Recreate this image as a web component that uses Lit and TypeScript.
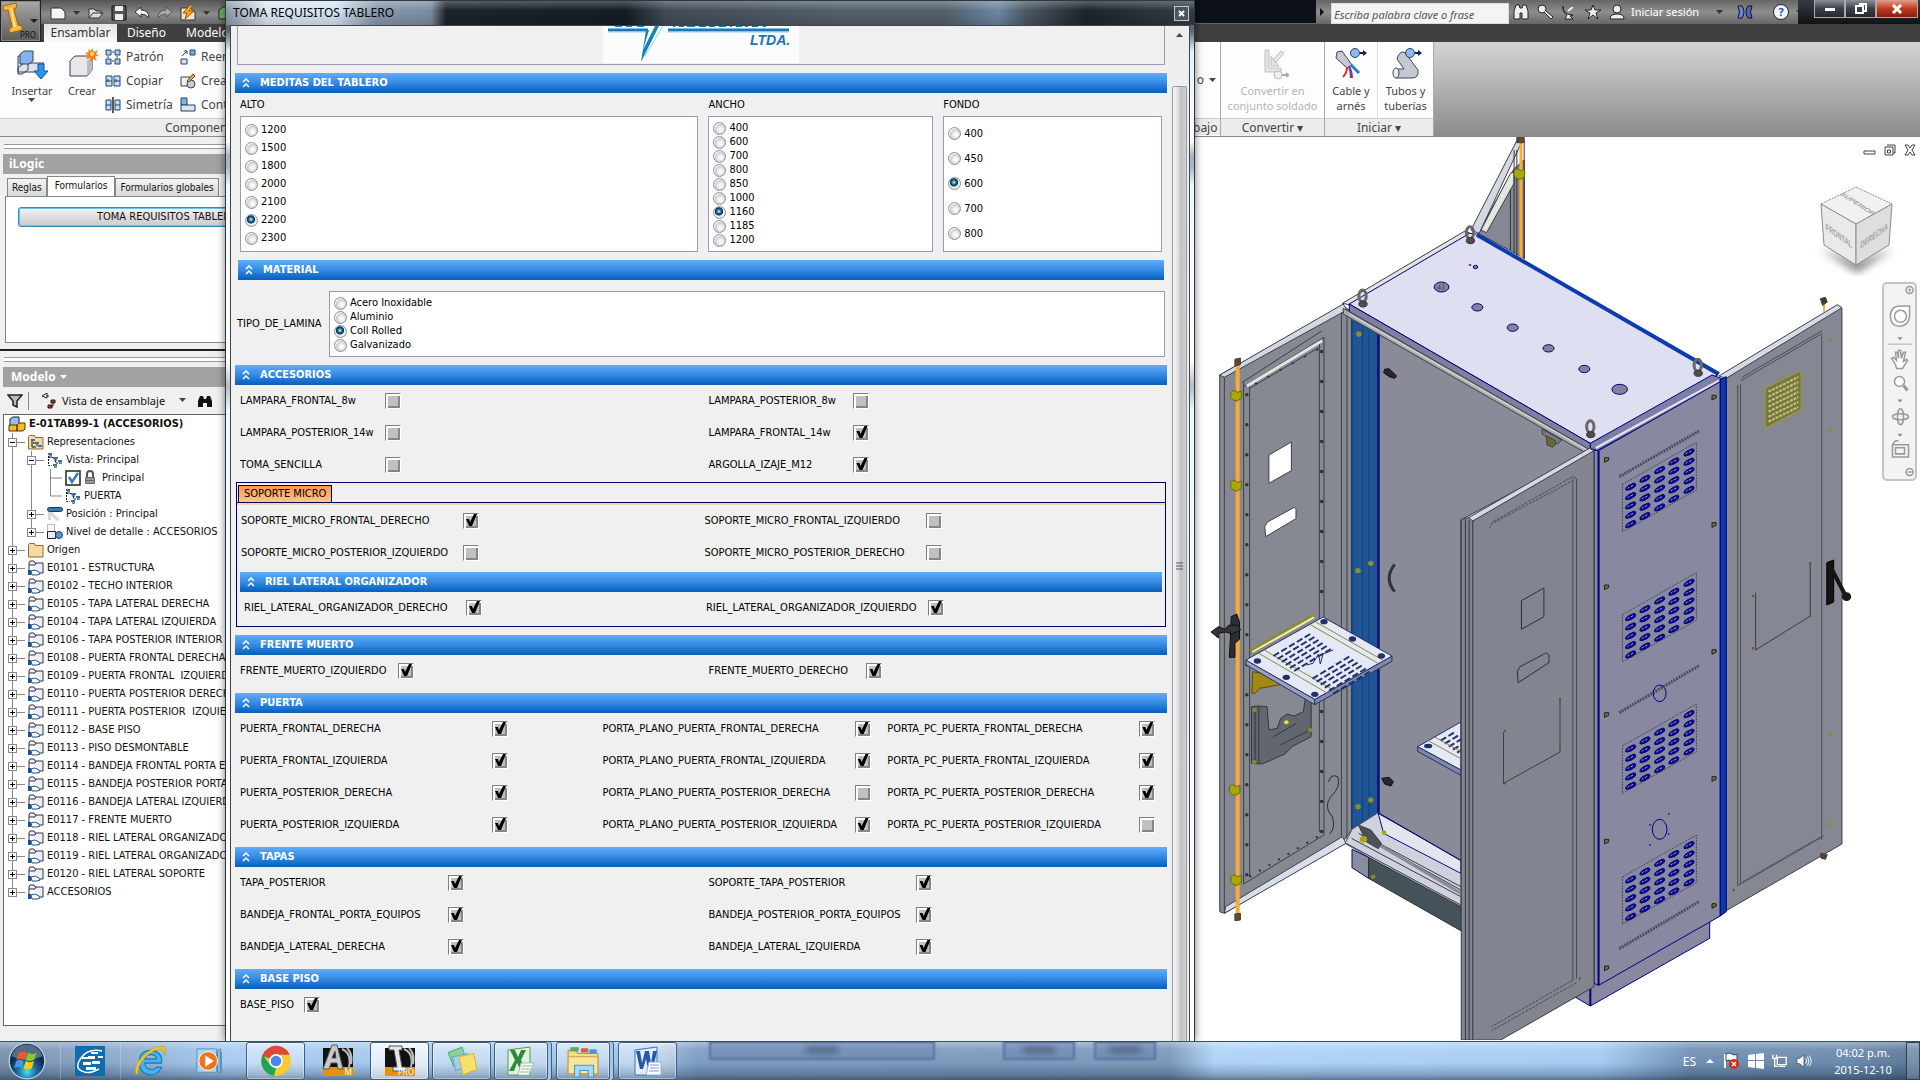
import { LitElement, html, svg, css, nothing } from "lit";
import { customElement } from "lit/decorators.js";

type Field = [label: string, on: boolean];

const ALTO = ["1200", "1500", "1800", "2000", "2100", "2200", "2300"];
const ANCHO = ["400", "600", "700", "800", "850", "1000", "1160", "1185", "1200"];
const FONDO = ["400", "450", "600", "700", "800"];
const LAMINA = ["Acero Inoxidable", "Aluminio", "Coll Rolled", "Galvanizado"];

const ACCESORIOS: Field[] = [
  ["LAMPARA_FRONTAL_8w", false], ["LAMPARA_POSTERIOR_8w", false],
  ["LAMPARA_POSTERIOR_14w", false], ["LAMPARA_FRONTAL_14w", true],
  ["TOMA_SENCILLA", false], ["ARGOLLA_IZAJE_M12", true],
];
const MICRO: Field[] = [
  ["SOPORTE_MICRO_FRONTAL_DERECHO", true], ["SOPORTE_MICRO_FRONTAL_IZQUIERDO", false],
  ["SOPORTE_MICRO_POSTERIOR_IZQUIERDO", false], ["SOPORTE_MICRO_POSTERIOR_DERECHO", false],
];
const RIEL: Field[] = [["RIEL_LATERAL_ORGANIZADOR_DERECHO", true], ["RIEL_LATERAL_ORGANIZADOR_IZQUIERDO", true]];
const FRENTE: Field[] = [["FRENTE_MUERTO_IZQUIERDO", true], ["FRENTE_MUERTO_DERECHO", true]];
const PUERTA: Field[] = [
  ["PUERTA_FRONTAL_DERECHA", true], ["PORTA_PLANO_PUERTA_FRONTAL_DERECHA", true], ["PORTA_PC_PUERTA_FRONTAL_DERECHA", true],
  ["PUERTA_FRONTAL_IZQUIERDA", true], ["PORTA_PLANO_PUERTA_FRONTAL_IZQUIERDA", true], ["PORTA_PC_PUERTA_FRONTAL_IZQUIERDA", true],
  ["PUERTA_POSTERIOR_DERECHA", true], ["PORTA_PLANO_PUERTA_POSTERIOR_DERECHA", false], ["PORTA_PC_PUERTA_POSTERIOR_DERECHA", true],
  ["PUERTA_POSTERIOR_IZQUIERDA", true], ["PORTA_PLANO_PUERTA_POSTERIOR_IZQUIERDA", true], ["PORTA_PC_PUERTA_POSTERIOR_IZQUIERDA", false],
];
const TAPAS: Field[] = [
  ["TAPA_POSTERIOR", true], ["SOPORTE_TAPA_POSTERIOR", true],
  ["BANDEJA_FRONTAL_PORTA_EQUIPOS", true], ["BANDEJA_POSTERIOR_PORTA_EQUIPOS", true],
  ["BANDEJA_LATERAL_DERECHA", true], ["BANDEJA_LATERAL_IZQUIERDA", true],
];

type Node = { text: string; depth: number; icon: string; sign?: "+" | "-" };
const part = (text: string): Node => ({ text, depth: 0, icon: "part", sign: "+" });
const TREE: Node[] = [
  { text: "Representaciones", depth: 0, icon: "reps", sign: "-" },
  { text: "Vista: Principal", depth: 1, icon: "view", sign: "-" },
  { text: "Principal", depth: 2, icon: "check" },
  { text: "PUERTA", depth: 2, icon: "view" },
  { text: "Posición : Principal", depth: 1, icon: "pos", sign: "+" },
  { text: "Nivel de detalle : ACCESORIOS", depth: 1, icon: "lod", sign: "+" },
  { text: "Origen", depth: 0, icon: "folder", sign: "+" },
  ...[
    "E0101 - ESTRUCTURA", "E0102 - TECHO INTERIOR", "E0105 - TAPA LATERAL DERECHA", "E0104 - TAPA LATERAL IZQUIERDA",
    "E0106 - TAPA POSTERIOR INTERIOR", "E0108 - PUERTA FRONTAL DERECHA", "E0109 - PUERTA FRONTAL  IZQUIERDA",
    "E0110 - PUERTA POSTERIOR DERECHA", "E0111 - PUERTA POSTERIOR  IZQUIERDA", "E0112 - BASE PISO", "E0113 - PISO DESMONTABLE",
    "E0114 - BANDEJA FRONTAL PORTA E", "E0115 - BANDEJA POSTERIOR PORTA", "E0116 - BANDEJA LATERAL IZQUIERDA",
    "E0117 - FRENTE MUERTO", "E0118 - RIEL LATERAL ORGANIZADOR", "E0119 - RIEL LATERAL ORGANIZADOR",
    "E0120 - RIEL LATERAL SOPORTE", "ACCESORIOS",
  ].map(part),
];

const icon = (w: number, h: number, body: unknown) =>
  html`<svg class="ico" width=${w} height=${h} viewBox="0 0 ${w} ${h}" aria-hidden="true">${body}</svg>`;

const viewMarks = svg`<g fill="#3f6f9f" stroke="#123" stroke-width="1"><path d="M1.5 1v12.500h3M1.500 5.500h5M8.500 5.500v5.500h4" fill="none" stroke-dasharray="2 1"/><path d="M1 1h4v2H1zM6 5h5v2H6zM11 8h4v2h-4zM6 12h4v2H6z" stroke="none"/><path d="M2 4h3M7 8h3M12 11h3M7 15h3"/></g>`;
const folderShape = svg`<path d="M.5 15V2.500l1-1h5l1 2h7.500V15z" fill="#f6d9a0" stroke="#8b6a3c"/>`;
const TREE_ICONS: Record<string, unknown> = {
  part: icon(16, 16, svg`<path d="M1 3l1-2h4l1 2h8v10h-3" fill="#eceef6" stroke="#334"/><path d="M1 3v7M1 5h6l1-2" fill="none" stroke="#334"/><path d="M0 10h3v5H0z" fill="#1d4f94"/><path d="M3 11l4-1 4 2 1 2-3 1H4z" fill="#fff" stroke="#1d4f94"/>`),
  reps: icon(16, 16, svg`${folderShape}<path d="M3 5h4v2H3zM7 8h4v2H7zM10 11h4v2h-4z" fill="#3f6f9f"/><path d="M4 7v6h4M5 9h2M9 10v2" stroke="#111" fill="none"/>`),
  view: icon(16, 16, viewMarks),
  pos: icon(16, 16, svg`<path d="M1 6l3-1 9 9-3 1zM1 6h3v8H1z" fill="#d8d8dc"/><rect x="0.500" y="1.500" width="15" height="4" rx="2" fill="#3f78ad" stroke="#123a60"/>`),
  lod: icon(16, 16, svg`<path d="M.5.500h7v7h-7z" fill="#fafafa" stroke="#bbb"/><path d="M.5 7.500h8v7h-8z" fill="#e4ecf6" stroke="#222"/><circle cx="12" cy="11" r="3.500" fill="#5d92cc" stroke="#16406e"/>`),
  folder: icon(16, 16, folderShape),
  check: icon(34, 16, svg`<rect x="1" y="1" width="14" height="14" fill="#fff" stroke="#222" stroke-width="1.500"/><path d="M4 7l3 5 6-9" fill="none" stroke="#3c78b8" stroke-width="2.500"/><path d="M22 8V4q0-3 3-3t3 3v4" fill="none" stroke="#555" stroke-width="2"/><rect x="20" y="7" width="10" height="7" rx="1" fill="#666"/><path d="M21 9h8M21 12h8" stroke="#ccc"/>`),
};

/* Cabinet drawing: the frame is 1568 x 2709 units, stretched over the view. */
const poly = (points: string, fill: string, stroke = "#3c3f4a") =>
  svg`<polygon points=${points} fill=${fill} stroke=${stroke}></polygon>`;
const line = (d: string, stroke = "#3c3f4a", width = 1, dash = "") =>
  svg`<path d=${d} fill="none" stroke=${stroke} stroke-width=${width} stroke-dasharray=${dash || nothing}></path>`;

const vent = (dy: number) => svg`<g transform="translate(0 ${dy})">
  ${line("M920 1063L1081 937V1080L920 1205z", "#4a4a58", 1, "2 1")}
  ${[[938, 1070], [969, 1046], [1001, 1020], [1032, 994], [1065, 967]].map(([x, y]) =>
    [0, 1, 2, 3, 4].map((r) => svg`<path transform="translate(${x} ${y + r * 28})" d="M-11 10l1-7 6-7 11-7 4 3-1 7-8 8-9 4z" fill="#0a0a8c" stroke="#00007c"></path><path transform="translate(${x} ${y + r * 28})" d="M-7 5l4-4M0 0l5-4" stroke="#a6a6d0" fill="none"></path>`))}
</g>`;
const hook = (x: number, y: number) => svg`<ellipse cx=${x} cy=${y - 10} rx="8" ry="18" fill="none" stroke="#66686c" stroke-width="3"></ellipse><ellipse cx=${x + 1} cy=${y + 14} rx="9" ry="9" fill="#4c4e52" stroke="#333"></ellipse>`;
const screw = (x: number, y: number) => svg`<path d="M${x - 4} ${y - 7}h9v8l-9 6z" fill="#6f7030" stroke="#222"></path>`;
const clamp = (x: number, y: number) => svg`<path d="M${x - 12} ${y - 10}l7 -6 8 6 8-4v22l-9 8-7-2-7-8z" fill="#a8a80c" stroke="#6a6a00"></path>`;
const slots = (x: number, y: number, rows: number, cols: number) => svg`<g stroke="#22306a" stroke-width="2">
  ${Array.from({ length: rows }, (_, r) => Array.from({ length: cols }, (_, c) =>
    svg`<path d="M${x + r * 9 + c * 17} ${y + r * 9 - c * 14}l12-10"></path>`))}</g>`;

const cabinet = svg`
  ${poly("605,310 683,118 706,90 706,385 640,335", "#858792")}
  ${poly("590,300 690,32 702,32 608,310", "#d4d8e2")}
  ${poly("612,300 676,130 684,125 684,160 624,308", "#e6e6e0")}
  ${line("M684 60V370M690 60V378M676 180V360M706 30V388", "#333")}
  ${line("M699 40V384", "#fbab2e", 3)}
  ${poly("690,22 706,22 706,38 690,38", "#6a4a10")}${clamp(696, 132)}

  ${poly("43,735 312,528 330,545 330,2100 310,2138 53,2350 43,2345", "#868892")}
  ${poly("43,735 312,522 320,540 53,742", "#d3d7e2")}
  ${poly("53,2350 56,2330 310,2120 318,2140", "#d9dcea")}
  ${line("M53 742V2345M308 548V2118M320 545V2128M330 560V2095")}
  ${line("M92 757L265 603M95 770L270 622V2115L95 2262V757M108 770V2242M260 630V2105")}
  ${line("M102 768L266 632", "#e4e4dc", 3)}
  ${line("M102 790V2240M265 660V2110", "#2f3036", 3, "3 27")}
  ${line("M108 2240L262 2115", "#333", 2, "2 9")}
  ${line("M120 762L262 654", "#333", 2, "2 12")}
  ${line("M108 775L262 650")}
  ${poly("150,975 199,936 199,1022 150,1060", "#fff")}
  ${poly("141,1190 147,1176 205,1132 209,1138 209,1166 143,1220", "#fff")}
  ${line("M82 700V2365", "#f9a93a", 4)}
  ${poly("76,688 88,684 88,704 76,708", "#6a4a10")}${poly("76,2352 88,2350 88,2370 76,2372", "#6a4a10")}
  ${clamp(79, 797)}${clamp(79, 1067)}${clamp(76, 1980)}${clamp(79, 2250)}
  ${poly("68,1460 80,1452 86,1475 86,1528 76,1540 76,1582 64,1582 66,1530", "#2c2d31", "#111")}
  ${poly("24,1506 40,1490 54,1498 62,1486 84,1486 88,1500 70,1512 56,1506 40,1510 40,1524", "#33343a", "#111")}

  ${poly("331,570 388,610 388,2048 345,2085 331,2098", "#1f5597", "#123a6c")}
  ${line("M354 590V2080M368 600V2070", "#14407c")}
  ${line("M388 612V2050", "#0a0a80", 2)}
  ${[[346, 612], [344, 1322], [372, 1300], [344, 2030], [372, 2010]].map(([x, y]) => svg`<ellipse cx=${x} cy=${y} rx="6" ry="8" fill="#8c8c2c"></ellipse>`)}

  ${poly("331,2098 388,2048 568,2192 568,2345 316,2140", "#cfd1dc", "#555")}
  ${poly("388,2050 568,2190 568,2230 400,2110", "#e4e5ee", "#0a0a80")}
  ${line("M318 2140L568 2325M330 2125L568 2300M345 2110L568 2280M390 2140L568 2270", "#3a3c44")}
  ${line("M360 2120L568 2290", "#888a96", 3)}
  ${poly("345,2085 372,2100 395,2140 388,2156 362,2135", "#4e5058")}
  ${poly("331,2158 367,2182 367,2245 331,2213", "#8a8ca0", "#0a0a80")}
  ${poly("367,2182 568,2330 568,2402 367,2245", "#45525a", "#2a3338")}
  <ellipse cx="356" cy="2128" rx="8" ry="10" fill="#a8a80c"></ellipse><ellipse cx="377" cy="2240" rx="5" ry="6" fill="#8c8c2c"></ellipse><ellipse cx="401" cy="2108" rx="5" ry="7" fill="#a8a80c"></ellipse>

  ${poly("390,600 850,950 850,962 568,1170 568,2192 390,2050", "#8a8b98", "#33343e")}
  ${line("M390 612V2050L568 2191", "#0a0a80")}
  ${poly("402,718 412,716 428,738 424,745 412,740 400,728", "#26272b", "#111")}
  ${line("M424 1303Q400 1345 424 1385", "#33343a", 3)}
  ${poly("396,1945 412,1942 421,1955 416,1968 402,1962", "#26272b", "#111")}
  ${poly("745,897 788,930 778,942 745,912", "#777a7c")}${poly("754,918 774,932 774,944 768,952 756,945", "#6c6a2a")}

  ${poly("310,520 577,303 592,312 325,524", "#e3e4e0")}
  ${poly("325,522 587,310 602,312 1127,735 850,940", "#dfdff2", "#00007c")}
  ${poly("325,522 850,940 850,962 325,545", "#7f80a0", "#00007c")}
  ${poly("312,535 325,545 850,960 835,965 312,552", "#a9ada9")}
  ${line("M325 552L845 962", "#e0e2dc", 1)}
  ${poly("850,940 1115,735 1135,745 1135,758 865,962 850,955", "#7e7fa6", "#00007c")}
  ${line("M862 954L1130 752", "#e4e4f4", 2)}
  ${line("M603 314L1130 732", "#0c3cae", 4)}
  ${[[526, 471, 16, 15], [604, 532, 12, 11], [681, 593, 12, 11], [759, 655, 12, 11], [837, 717, 12, 11], [914, 778, 17, 15], [600, 411, 5, 5]].map(([x, y, a, b]) =>
    svg`<ellipse cx=${x} cy=${y} rx=${a} ry=${b} fill="#8184a0" stroke="#00006c"></ellipse>`)}
  ${line("M516 474h10M522 464v16M530 460v20", "#555")}
  <circle cx="588" cy="405" r="3" fill="#8c2a2a"></circle>
  ${hook(588, 318)}${hook(354, 508)}${hook(1084, 716)}${hook(850, 900)}

  ${poly("1146,742 1390,530 1398,535 1398,2142 1146,2342", "#858792")}
  ${poly("1130,738 1388,524 1398,533 1146,745", "#d6dae6")}
  ${line("M1171 765V2267M1177 762V2262M1354 615V2130M1171 2267L1358 2118M1178 752L1355 610M1180 742L1355 602", "#4a4c56", 1)}
  ${line("M1182 2255L1352 2120", "#4a4c56", 1, "2 1")}
  ${poly("1231,775 1309,722 1309,838 1231,895", "#77783a", "#a0a02c")}
  ${line("M1238 785L1303 741M1238 800L1303 756M1238 815L1303 771M1238 830L1303 786M1238 845L1303 801M1238 860L1303 816M1238 875L1303 831", "#c4c48a", 2, "3 1")}
  ${line("M1210 1388V1560L1329 1458V1297", "#3c3c46")}
  ${[[1329, 1300], [1329, 1458], [1204, 1398], [1204, 1555], [1162, 2280]].map(([x, y]) => svg`<ellipse cx=${x} cy=${y} rx="2" ry="4" fill="#8a3a34"></ellipse>`)}
  ${[[1371, 630], [1371, 900], [1371, 1813], [1371, 2083]].map(([x, y]) => svg`<ellipse cx=${x} cy=${y} rx="4" ry="6" fill="#8c8c2c"></ellipse>`)}
  ${poly("1365,1298 1380,1290 1380,1416 1365,1425", "#141414", "#000")}
  ${line("M1374 1312L1405 1395", "#161616", 4)}<ellipse cx="1408" cy="1400" rx="10" ry="13" fill="#1a1a1a"></ellipse>
  ${line("M1359 520V545", "#f9a93a", 2)}${poly("1351,506 1362,502 1366,516 1356,526", "#4e3a14")}${poly("1352,2170 1366,2174 1362,2188 1352,2184", "#6a3a10")}

  ${poly("818,2602 850,2628 1110,2425 1110,2370 858,2560", "#8889a0", "#00007c")}
  ${line("M850 2572V2628", "#00007c", 2)}
  ${poly("858,960 868,962 1133,755 1133,2358 868,2566 858,2560", "#8889a0", "#00007c")}
  ${line("M868 962V2566", "#00007c", 2)}
  ${poly("1133,748 1146,740 1146,2345 1133,2358", "#1038ac", "#00007c")}
  ${[0, 391, 785, 1178].map(vent)}
  ${line("M913 1040L1088 902M913 1748L1088 1606M913 2456L1088 2314", "#4c4d5c", 3, "2 1")}
  <ellipse cx="1001" cy="1690" rx="14" ry="25" fill="none" stroke="#00007c"></ellipse>
  <ellipse cx="1001" cy="2098" rx="16" ry="30" fill="none" stroke="#00007c"></ellipse>
  ${[[980, 2085], [1021, 2052], [1021, 2112], [980, 2145]].map(([x, y]) => svg`<circle cx=${x} cy=${y} r="2" fill="#00007c"></circle>`)}
  ${[990, 1372, 1755, 2135, 2515].map((y) => screw(885, y))}${[803, 1185, 1566, 1947, 2328].map((y) => screw(1119, y))}

  ${poly("115,1625 175,1640 175,1664 130,1675 120,1690 113,1690", "#a08a12", "#5c4e00")}
  ${poly("112,1730 128,1728 146,1730 150,1800 168,1795 176,1765 190,1752 205,1758 225,1745 230,1700 242,1700 242,1820 200,1850 185,1872 135,1902 112,1900", "#62666e", "#34363c")}
  ${line("M128 1730V1900M160 1820L210 1780M175 1845L240 1800M120 1735V1898", "#34363c")}
  ${[[118, 1740], [118, 1896], [240, 1800]].map(([x, y]) => svg`<ellipse cx=${x} cy=${y} rx="5" ry="6" fill="#8c8c2c"></ellipse>`)}<ellipse cx="188" cy="1777" rx="5" ry="6" fill="#e4e420"></ellipse>
  ${line("M280 1955Q285 1930 300 1940Q308 1970 285 2000Q268 2030 288 2060Q296 2095 282 2112", "#26302c", 1)}
  ${line("M110 1566L248 1458", "#8c8c34", 5)}${line("M114 1566L248 1462", "#efefc4", 2)}
  ${poly("100,1590 250,1708 250,1724 100,1604", "#9aa0c0", "#22306a")}
  ${poly("250,1708 418,1578 418,1594 250,1724", "#8188ac", "#22306a")}
  ${poly("100,1590 268,1461 418,1578 250,1708", "#e5e8f6", "#22306a")}
  ${line("M128 1570L278 1690M140 1560L290 1680M240 1484L388 1600M252 1476L400 1592", "#8c8a3c", 1)}
  ${slots(160, 1578, 6, 5)}${slots(245, 1646, 6, 5)}
  ${line("M232 1605L246 1600L258 1572L262 1602L268 1572L290 1560", "#22306a", 1)}
  ${[[125, 1593], [270, 1475], [395, 1578], [250, 1693], [188, 1642], [332, 1527]].map(([x, y]) => svg`<ellipse cx=${x} cy=${y} rx="8" ry="8" fill="#22306a"></ellipse>`)}
  ${poly("474,1850 568,1776 568,1920", "#e5e8f6", "#22306a")}${poly("474,1850 568,1920 568,1936 474,1864", "#8188ac", "#22306a")}
  ${slots(524, 1832, 5, 2)}${line("M497 1832L568 1886M512 1822L568 1864", "#8c8a3c")}
  <ellipse cx="497" cy="1848" rx="9" ry="7" fill="#22306a"></ellipse>

  ${poly("569,1168 588,1162 594,1172 855,962 858,966 858,2570 655,2730 569,2730", "#82848f")}
  ${poly("585,1163 848,955 858,962 594,1173", "#d5d9e5")}
  ${line("M578 1168V2730M586 1170V2730M594 1172V2730", "#33363f", 1)}
  ${line("M812 1046V2550M820 1046V2545", "#4a4c56")}
  ${line("M630 1195L638 1175L812 1040L820 1046M640 1178L812 1052M812 2550L635 2690M820 2558L635 2702", "#4a4c56", 1, "3 1")}
  ${line("M700 1412L749 1374V1460L700 1498zM691 1625L697 1610L755 1568L760 1575V1598L693 1658z", "#2c2e38")}
  ${line("M661 1805V1960L784 1866V1705", "#3c3e48")}
  ${[[784, 1707], [664, 1803], [664, 1960], [784, 1864], [827, 2545]].map(([x, y]) => svg`<ellipse cx=${x} cy=${y} rx="2" ry="4" fill="#8a3a34"></ellipse>`)}
`;

@customElement("form-bar")
class FormBar extends LitElement {
  static properties = { text: {} };
  declare text: string;
  static styles = css`
    :host { display: block; }
    .bar { display: flex; align-items: center; gap: 10px; width: 100%; height: 20px; padding: 0 7px; border: 0;
      background: linear-gradient(#62adf8, #2f86e0 55%, #0b64c4 92%, #1560b0); color: #fff;
      font: bold 11px/20px "DejaVu Sans Condensed", "Noto Sans", sans-serif; text-align: left; }
  `;
  render() {
    return html`<button class="bar" type="button">
      <svg width="8" height="10" viewBox="0 0 8 10" aria-hidden="true"><path d="M1 4l3-3 3 3M1 9l3-3 3 3" fill="none" stroke="#fff" stroke-width="1.500"/></svg>
      <span>${this.text}</span></button>`;
  }
}

@customElement("requisitos-form")
class RequisitosForm extends LitElement {
  static styles = css`
    :host { display: block; box-sizing: border-box; padding: 0 2px 0 4px; background: #f0f0f0; color: #000;
      font: 11px/14px "DejaVu Sans Condensed", "Noto Sans", sans-serif; white-space: nowrap; }
    .banner { display: flex; justify-content: center; box-sizing: border-box; height: 39px; margin: 0 2px 8px; border: 1px solid #9a9ab4; border-top: 0; }
    .logo { width: 196px; height: 37px; background: #fcfcfd; }
    .sizes { display: grid; grid-template-columns: 459fr 225fr 219fr; column-gap: 10px; padding: 0 5px 8px; }
    .caption { display: block; line-height: 23px; }
    .box { display: flex; flex-direction: column; box-sizing: border-box; border: 1px solid #9a9ab4; background: #fff; }
    .sizes .box { height: 136px; }
    fieldset { display: block; min-width: 0; margin: 0; padding: 0; border: 0; }
    legend { padding: 0; }
    .opt { display: flex; align-items: center; gap: 3px; padding-left: 4px; }
    .r18, .r14, .r25 { padding-top: 4px; }
    .r18 .opt { height: 18px; }
    .r14 .opt { height: 14px; }
    .r25 .opt { height: 25px; }
    .narrow { margin: 0 3px; }
    .lamina { display: grid; grid-template-columns: 92px 1fr; align-items: center; padding: 11px 2px 8px; }
    .lamina .box { height: 66px; }
    input { appearance: none; margin: 0; flex: none; }
    input[type="radio"] { box-sizing: border-box; width: 13px; height: 13px; border: 1px solid #8c8f94; border-radius: 50%;
      background: radial-gradient(circle at 60% 60%, #fafafa 15%, #ccccd0 58%, #f4f4f4 62%); }
    input[type="radio"]:checked { background: radial-gradient(circle at 45% 40%, #9fe0f8 6%, #1c6c98 24%, #0c2c48 42%, #ececee 50%); }
    input[type="checkbox"] { position: relative; box-sizing: border-box; width: 16px; height: 16px; border: 1px solid;
      border-color: #808080 #fff #fff #808080; background: #c0c0c0; box-shadow: inset 2px 2px #fff, inset -2px -2px #868686; }
    input[type="checkbox"]:checked::before { content: ""; position: absolute; inset: -1px; background: #000;
      clip-path: polygon(3px 6px, 6px 6px, 7px 9px, 11px 1px, 14px 1px, 9px 13px, 6px 13px); }
    .fields { display: grid; grid-auto-rows: 32px; padding: 0 0 6px 5px; }
    .two { grid-template-columns: 469fr 459fr; }
    .three { grid-template-columns: 363fr 285fr 280fr; }
    .field { display: grid; align-items: center; justify-content: start; }
    .w145 .field { grid-template-columns: 145px 16px; }
    .w222 .field { grid-template-columns: 222px 16px; }
    .w158 .field { grid-template-columns: 158px 16px; }
    .w208 .field { grid-template-columns: 208px 16px; }
    .w252 .field { grid-template-columns: 252px 16px; }
    .w64 .field { grid-template-columns: 64px 16px; }
    .tabbox { margin: -5px 1px 8px; padding-bottom: 2px; border: 1px solid #000064; }
    .strip { display: flex; align-items: flex-end; height: 19px; padding-left: 1px; border-bottom: 1px solid #000064; box-shadow: 0 2px #f6d4ac; margin-bottom: 2px; }
    .tab { height: 17px; padding: 0 5px; border: 1px solid #000064; border-bottom: 0; background: linear-gradient(#fb9650, #fdc887);
      font: inherit; color: #000; }
    .tabbox .fields { grid-template-columns: 464fr 461fr; padding: 0 0 3px 4px; }
    .tabbox form-bar { margin: 0 3px; }
    .tabbox .rail { padding: 0 0 0 7px; }
  `;

  private radios(name: string, list: string[], value: string, cls: string) {
    return html`<div class="box ${cls}">${list.map((v) => html`<label class="opt"><input type="radio" name=${name} .checked=${v === value}>${v}</label>`)}</div>`;
  }
  private fields(list: Field[], cls: string) {
    return html`<div class="fields ${cls}">${list.map(([text, on]) => html`<label class="field"><span>${text}</span><input type="checkbox" .checked=${on}></label>`)}</div>`;
  }
  private size(name: string, list: string[], value: string, cls: string) {
    return html`<fieldset class="group"><legend class="caption">${name}</legend>${this.radios(name, list, value, cls)}</fieldset>`;
  }

  render() {
    return html`
      <div class="banner"><svg class="logo" viewBox="0 0 196 37" role="img" aria-label="LTDA.">
        <path d="M5 4h40M65 4h121" stroke="#1878b8" stroke-width="3"/><path d="M5 6h38M64 6h122" stroke="#8fd0ee" stroke-width="1"/>
        <path d="M12 0h7M23 0h6M34 0h7M70 0h2M76 0h5M84 0h8M96 0h7M106 0h6M116 0h7M127 0h2M133 0h6M142 0h3M149 0h6M160 0h3" stroke="#1a7fc0" stroke-width="2"/>
        <path d="M46 4h-3l-5 32 18-36h-4l-12 24z" fill="#1580c0"/><path d="M60 0L42 30" stroke="#8fd0ee" stroke-width="1"/>
        <text x="147" y="19" font-family="Liberation Sans" font-size="14" font-weight="bold" font-style="italic" fill="#1875b4">LTDA.</text>
      </svg></div>
      <form-bar text="MEDITAS DEL TABLERO"></form-bar>
      <div class="sizes">
        ${this.size("ALTO", ALTO, "2200", "r18")}${this.size("ANCHO", ANCHO, "1160", "r14")}${this.size("FONDO", FONDO, "600", "r25")}
      </div>
      <form-bar class="narrow" text="MATERIAL"></form-bar>
      <div class="lamina" role="group" aria-labelledby="lam"><span id="lam">TIPO_DE_LAMINA</span>${this.radios("lamina", LAMINA, "Coll Rolled", "r14")}</div>
      <form-bar text="ACCESORIOS"></form-bar>
      ${this.fields(ACCESORIOS, "two w145")}
      <div class="tabbox">
        <div class="strip"><button class="tab" type="button">SOPORTE MICRO</button></div>
        ${this.fields(MICRO, "w222")}
        <form-bar text="RIEL LATERAL ORGANIZADOR"></form-bar>
        ${this.fields(RIEL, "rail w222")}
      </div>
      <form-bar text="FRENTE MUERTO"></form-bar>
      ${this.fields(FRENTE, "two w158")}
      <form-bar text="PUERTA"></form-bar>
      ${this.fields(PUERTA, "three w252")}
      <form-bar text="TAPAS"></form-bar>
      ${this.fields(TAPAS, "two w208")}
      <form-bar text="BASE PISO"></form-bar>
      ${this.fields([["BASE_PISO", true]], "two w64")}
    `;
  }
}

@customElement("task-bar")
class TaskBar extends LitElement {
  static styles = css`
    :host { display: block; }
    .bar { position: relative; display: flex; align-items: center; box-sizing: border-box; height: 39px; padding-left: 7px; overflow: hidden;
      border-top: 1px solid #35506e; color: #fff; font: 12px/17px "Noto Sans", sans-serif;
      background: linear-gradient(#ffffff59, #ffffff14 20%, #0000 55%, #0b1f3a40 85%, #0b1f3a80),
        linear-gradient(90deg, #7890ac 0, #8aa8c8 110px, #a8ccf0 230px, #9fc4e8 640px, #7d9cc0 700px, #7c98ba 1170px, #b0d4f6 1215px, #a4ccf2 1600px, #6f90b2 1690px, #6b8aac 1850px, #5a7594); }
    button { flex: none; box-sizing: border-box; display: flex; align-items: center; justify-content: center; height: 38px; padding: 0; border: 1px solid transparent; background: none; color: inherit; font: inherit; }
    .start { width: 40px; margin-right: 13px; }
    .pin { width: 60px; border-left-color: #ffffff38; }
    .pin.last { margin-right: 6px; border-left-color: transparent; }
    .run { width: 59px; margin-right: 3px; border-radius: 3px; }
    .open { border-color: #3d5c80; background: linear-gradient(#ffffff80, #ffffff30); box-shadow: inset 0 0 0 1px #ffffff60; }
    .active { background: linear-gradient(#ffffffd0, #ffffff90); }
    .stack { box-shadow: inset 0 0 0 1px #ffffff60, 3px 0 #a9c8e6, 4px 0 #3d5c80; width: 54px; margin-right: 8px; }
    .grow { flex: 1; }
    .glass { position: absolute; top: -2px; height: 16px; border: 2px solid #5870a0; border-top-color: #101060; filter: blur(1px); border-radius: 2px; background: #5f7ba860; }
    .glass i { display: block; width: 32px; height: 6px; margin: 5px auto; background: #2c405c; filter: blur(3px); opacity: .6; }
    .g1 { left: 709px; width: 222px; } .g2 { left: 1003px; width: 68px; } .g3 { left: 1094px; width: 58px; }
    .tray { display: flex; align-items: center; gap: 8px; }
    .lang { margin-right: 2px; }
    .clock { display: block; width: 86px; text-align: center; font-size: 11px; }
    .desk { width: 14px; border: 1px solid #2c405a; background: #ffffff30; }
  `;
  render() {
    const mark = (w: number, h: number, b: unknown) => html`<svg width=${w} height=${h} viewBox="0 0 32 32" aria-hidden="true">${b}</svg>`;
    const app = (t: string, tag: unknown) => svg`<rect x="1" y="3" width="30" height="28" fill="#111"/><path d="M20 4q10 4 7 18M25 3q6 6 4 16" stroke="#bbb" stroke-width="2" fill="none"/><rect x="1" y="22" width="30" height="9" fill="#e8920c"/>${t === "A"
      ? svg`<path d="M10 0h5l6 24h-5l-1-6H9l-2 6H1zM13 6l-3 7h4z" fill="#c8cacc" stroke="#555"/>`
      : svg`<path d="M5 1h13v4h-3l3 17h4v4H9v-4h4L10 5H5z" fill="#e8e8e8" stroke="#555"/>`}${tag}`;
    return html`<nav class="bar" aria-label="Barra de tareas">
      <span class="glass g1"><i></i></span><span class="glass g2"><i></i></span><span class="glass g3"><i></i></span>
      <button class="start" aria-label="Inicio">${mark(38, 38, svg`<defs><radialGradient id="o" cx=".5" cy=".8"><stop offset="0" stop-color="#4fe0f8"/><stop offset=".5" stop-color="#1c6fa4"/><stop offset="1" stop-color="#0e2f52"/></radialGradient></defs><circle cx="16" cy="16" r="15" fill="url(#o)" stroke="#bcd6ea"/><path d="M3 12a13.500 13.500 0 0 1 26 0q-13 6-26 0z" fill="#fff" opacity=".3"/><path d="M9 9q4-2 7 0l-2 6q-3-2-7 0z" fill="#ec5a24"/><path d="M17 9q4 2 7 0l-2 6q-4 2-7 0z" fill="#8cc43c"/><path d="M7 16q3-2 6 0l-1 6q-4-2-7 0z" fill="#3c9ce4"/><path d="M15 16q3 2 7 0l-2 6q-4 2-7 0z" fill="#fcc81c"/>`)}</button>
      <button class="pin" aria-label="Enlace">${mark(32, 32, svg`<rect x="1" y="1" width="30" height="30" fill="#0f6cb0"/><path d="M28 6Q14 3 7 13T8 26q6 4 17-2" fill="none" stroke="#fff" stroke-width="1.500"/><path d="M17 7h7v2h-7zM24 11h5v2h-5zM8 12h6v2H8zM14 11h7v3h-7zM9 17h8v3H9zM18 16h8v3h-8zM12 22h10v3H12z" fill="#fff"/>`)}</button>
      <button class="pin" aria-label="Internet Explorer">${mark(34, 34, svg`<path d="M27 18H11q1 6 6 6 4 0 5-2h5q-3 7-11 7Q6 28 6 17T17 6q11 1 10 12zM11 14h11q0-4-5-4t-6 4z" fill="#42b4ee" stroke="#1878b8"/><path d="M3 29Q-1 20 13 8 24 0 30 3q2 2-1 8 1-6-2-6Q20 4 11 13 3 23 5 27z" fill="#f6c624" stroke="#c89410" stroke-width=".5"/>`)}</button>
      <button class="pin last" aria-label="Reproductor">${mark(30, 30, svg`<path d="M2 3h21v25H2z" fill="#a8d4ec" stroke="#5c94b8"/><path d="M24 5v22l3 2V3zM28 6v21" fill="#8cc0dc" stroke="#4c84a8"/><circle cx="14" cy="16" r="10" fill="#f0741c" stroke="#fff"/><path d="M11 10l9 6-9 6z" fill="#fff"/>`)}</button>
      <button class="run open" aria-label="Chrome">${mark(34, 34, svg`<circle cx="16" cy="16" r="14" fill="#f8cc30"/><path d="M16 16L3 11A14 14 0 0 1 29 10H16z" fill="#dc4a38"/><path d="M3.500 10L11 20l5 3-2 7A14 14 0 0 1 3.500 10z" fill="#1ca45c"/><circle cx="16" cy="16" r="6.500" fill="#fff"/><circle cx="16" cy="16" r="5" fill="#4888f0"/>`)}</button>
      <button class="run" aria-label="Autodesk M">${mark(32, 34, app("A", svg`<text x="30" y="30" text-anchor="end" font-size="8" font-family="Noto Sans" fill="#fff">M</text>`))}</button>
      <button class="run open active" aria-label="Inventor">${mark(32, 34, app("I", svg`<text x="30" y="30" text-anchor="end" font-size="8" font-family="Noto Sans" fill="#fff">PRO</text>`))}</button>
      <button class="run open" aria-label="Notas">${mark(34, 34, svg`<path d="M3 8l13-5 4 12-12 6z" fill="#8ad49a" stroke="#5cac70"/><path d="M7 12l14-3 2 12-13 4z" fill="#9cd0f0" stroke="#68a4cc"/><path d="M13 12l14-3 3 15-13 5z" fill="#f8e06c" stroke="#d0b43c"/>`)}</button>
      <button class="run open stack" aria-label="Excel">${mark(32, 34, svg`<path d="M3 5l22-3v28H3z" fill="#e4f2e0" stroke="#4c9c50"/><path d="M5 5h5l3 7 3-7h5l-5 10 5 11h-5l-4-8-3 8H4l6-11z" fill="#2c8c3c"/><path d="M16 18h13l-5 12H13z" fill="#fff" stroke="#9cc4a0"/><path d="M17 21h10M16 24h10M15 27h10" stroke="#8cb890"/>`)}</button>
      <button class="run open stack" aria-label="Explorador">${mark(34, 34, svg`<path d="M2 6h7l2 3h19v20H2z" fill="#f4dc8c" stroke="#bc9440"/><path d="M4 3h8v4H4z" fill="#5cac5c"/><path d="M14 4h7v4h-7z" fill="#d06040"/><path d="M22 5h7v4h-7z" fill="#4c94d8"/><path d="M2 12h28v16H2z" fill="#f8e49c" stroke="#c8a04c"/><path d="M8 20h18v11h-5v-6h-8v6H8z" fill="#a4d8f4" stroke="#4c98c4"/>`)}</button>
      <button class="run open" aria-label="Word">${mark(32, 34, svg`<path d="M3 5l22-3v28H3z" fill="#e0ecf8" stroke="#3c74b8"/><path d="M4 6h4l2 12 3-12h4l2 12 2-12h4l-4 18h-5l-2-10-3 10H8z" fill="#2458a8"/><path d="M17 17h12v13H14z" fill="#fff" stroke="#8cacd4"/><path d="M18 20h9M18 23h9M17 26h10" stroke="#7c9ccc"/>`)}</button>
      <span class="grow"></span>
      <div class="tray">
        <span class="lang">ES</span>
        <svg width="8" height="6" aria-hidden="true"><path d="M0 5l4-4 4 4z" fill="#fff"/></svg>
        <svg width="18" height="18" viewBox="0 0 18 18" aria-hidden="true"><path d="M3 2v14" stroke="#fff" stroke-width="2"/><path d="M4 2q4-2 6 0t5 0v7q-3 2-5 0t-6 0z" fill="#fff" stroke="#345"/><circle cx="12" cy="12" r="5" fill="#d8281c"/><path d="M10 10l4 4M14 10l-4 4" stroke="#fff" stroke-width="1.500"/></svg>
        <svg width="16" height="16" viewBox="0 0 16 16" aria-hidden="true"><path d="M0 2l7-1v6H0zM8 1l8-1v7H8zM0 8h7v7l-7-1zM8 8h8v8l-8-1z" fill="#fff"/></svg>
        <svg width="16" height="16" viewBox="0 0 18 16" aria-hidden="true"><path d="M6 4h10v8H6zM8 14h7" fill="#6c88a8" stroke="#fff" stroke-width="1.500"/><path d="M1 1v4h4V1M3 5v9h4" fill="none" stroke="#fff" stroke-width="1.500"/></svg>
        <svg width="16" height="16" viewBox="0 0 18 16" aria-hidden="true"><path d="M1 5h3l5-4v14l-5-4H1z" fill="#fff" stroke="#456"/><path d="M11 5q2 3 0 6M13 3q3 5 0 10M15 2q4 6 0 12" fill="none" stroke="#fff"/></svg>
        <time class="clock">04:02 p.m.<br>2015-12-10</time>
      </div>
      <button class="desk" aria-label="Mostrar escritorio"></button>
    </nav>`;
  }
}

@customElement("app-root")
class AppRoot extends LitElement {
  static styles = css`
    :host { display: block; height: 100vh; overflow: hidden; background: #f0f0f0; color: #111; white-space: nowrap;
      font: 12px/16px "Noto Sans", "Open Sans", sans-serif; }
    button, input { font: inherit; color: inherit; }
    button { border: 0; background: none; padding: 0; margin: 0; }
    .ico { display: block; flex: none; }
    .desktop { position: relative; display: flex; flex-direction: column; height: 100%; }
    .main { flex: 1; min-height: 0; display: flex; flex-direction: column; }

    .top { display: grid; grid-template-columns: 41px 1fr; grid-template-rows: 24px 18px; background: #404040; }
    .appbtn { grid-row: 1 / 3; border: 1px solid #222; outline: 1px solid #888; outline-offset: -2px; background: linear-gradient(#a8a8a8, #5c5c5c); }
    .title { display: flex; background: #0c1018; }
    .quick { flex: none; box-sizing: border-box; display: flex; align-items: center; gap: 7px; padding: 2px 0 0 9px; width: 1154px; background: linear-gradient(#555, #8c8c8c 60%, #666); }
    .dark { flex: 1; background: #0c1018; border-bottom: 1px solid #666; }
    .center { flex: none; display: flex; align-items: center; box-sizing: border-box; width: 482px; height: 24px; background: linear-gradient(#666, #8e8e8e 50%, #666); color: #fff; font-size: 11px; }
    .search { flex: none; box-sizing: border-box; width: 178px; height: 21px; margin: 2px 0 0 3px; padding: 2px 2px 0; border: 1px solid #ddd; background: #f4f4f4; font-style: italic; }
    .search::placeholder { color: #555; opacity: 1; }
    .center .ico { margin: 0 3px; }
    .user { margin: 0 14px 0 2px; }
    .center .gap { margin: 0 12px 0 6px; }
    .winbtns { flex: none; display: flex; width: 122px; box-sizing: border-box; justify-content: flex-end; padding-right: 2px; background: linear-gradient(#383c42, #101216); }
    .winbtns button { display: flex; align-items: center; justify-content: center; box-sizing: border-box; width: 31px; height: 18px; border: 1px solid #aaa; border-top: 0; background: linear-gradient(#8c9098, #3c4048 50%, #24282e); }
    .winbtns .x { width: 42px; background: linear-gradient(#e0a090, #c03c20 50%, #8c1c08); }
    .tabs { display: flex; padding-left: 3px; color: #fff; }
    .tabs button { height: 18px; line-height: 16px; padding: 0 10px; }
    .tabs .on { background: linear-gradient(#e4e4e4, #fafafa); color: #333; width: 73px; padding: 0; }

    .ribbon { display: flex; height: 94px; background: #fdfdfd; color: #444; border-bottom: 1px solid #888; }
    .panel { display: flex; flex-direction: column; border-right: 1px solid #aaa; }
    .tools { display: flex; height: 76px; }
    .ptitle { height: 17px; border-top: 1px solid #ccc; background: #ececec; text-align: center; line-height: 17px; }
    .wide { flex: 1; } .wide .ptitle { text-align: left; padding-left: 165px; }
    .big { display: flex; flex-direction: column; align-items: center; padding-top: 6px; line-height: 15px; font-size: 11px; }
    .big span { display: block; margin-top: 3px; }
    .tools .ins { width: 56px; margin-left: 4px; } .tools .cre { width: 44px; }
    .small { display: grid; grid-template-rows: 24px 24px 24px; padding-top: 3px; width: 74px; margin-left: 1px; }
    .small.far { width: 45px; }
    .small button { display: flex; align-items: center; gap: 5px; }
    .off { color: #b4b4b4; }
    .conv { width: 103px; } .cable { width: 53px; box-sizing: border-box; border-right: 1px solid #ddd; } .tubo { width: 55px; }
    .rest { width: 486px; background: linear-gradient(#d4d4d4, #8c8c8c); }
    .edge { width: 27px; border-right: 1px solid #aaa; display: flex; flex-direction: column; align-items: flex-end; }
    .edge .mid { height: 76px; display: flex; align-items: center; gap: 5px; padding-right: 3px; }
    .edge .ptitle { width: 100%; box-sizing: border-box; text-align: right; padding-right: 4px; }

    .work { flex: 1; min-height: 0; display: flex; }
    .dock { box-sizing: border-box; width: 330px; display: flex; flex-direction: column; font: 11px/18px "DejaVu Sans Condensed", "Noto Sans", sans-serif; }
    .grip { height: 3px; margin: 7px 0 5px 4px; border: solid #999; border-width: 1px 0; flex: none; background: #fff; }
    .head { height: 20px; margin-left: 3px; padding-left: 6px; background: #a2a2a2; color: #fff; font: bold 12px/20px "Noto Sans", sans-serif; }
    .model { display: flex; align-items: center; gap: 4px; padding-left: 8px; }
    .dtabs { display: flex; align-items: flex-end; margin: 2px 0 0 7px; height: 20px; font-size: 10px; }
    .dtabs button { height: 18px; padding: 0 4px; border: 1px solid #888; border-bottom: 0; background: linear-gradient(#f4f4f4, #d8d8d8); }
    .dtabs .on { height: 21px; margin-bottom: -1px; background: #fff; padding: 0 7px 2px; }
    .pane { height: 147px; margin-left: 5px; padding: 10px 12px 0; box-sizing: border-box; border: 1px solid #888; background: #fff; }
    .rule { width: 100%; height: 20px; border: 1px solid #2c8cbc; border-radius: 3px; background: linear-gradient(#f4f4f4, #ddd 50%, #ccc); box-shadow: inset 0 0 0 1px #6cc4e8; line-height: 16px; }
    .blackline { height: 2px; margin-top: 6px; background: #222; }
    .dock .grip.second { margin: 6px 0 5px 4px; }
    .filter { display: flex; align-items: center; gap: 5px; height: 27px; padding-left: 7px; font: 11px/16px "Noto Sans", sans-serif; }
    .sep { width: 1px; height: 18px; background: #888; margin-right: 7px; }
    .filter .drop { display: flex; align-items: center; gap: 14px; margin-right: 5px; }
    .tree { flex: 1; margin: 0 0 15px 3px; padding: 0 0 0 4px; border: 1px solid #666; background: #fff; overflow: hidden; }
    .tree ul { list-style: none; margin: 0; padding: 0; }
    .node { display: flex; align-items: center; height: 18px; gap: 3px; }
    .node span { white-space: pre; }
    .node .guide { flex: none; display: block; }
    .root { font-weight: bold; }

    .canvas { position: relative; flex: 1; display: flex; justify-content: flex-end; background: #fff; overflow: hidden; }
    .cad { display: block; flex: none; width: 720px; height: 903px; }
    .cad * { vector-effect: non-scaling-stroke; }
    .doc { position: absolute; right: 4px; top: 7px; display: flex; gap: 8px; }
    .cube { position: absolute; right: 19px; top: 44px; }
    .nav { position: absolute; right: 3px; top: 145px; box-sizing: border-box; width: 35px; height: 199px; border: 2px solid #c4c4c8; border-radius: 5px; background: #f3f3f4; }

    .dialog { position: absolute; left: 225px; top: 0; bottom: 39px; width: 970px; display: grid; grid-template-rows: 24px 1fr; box-sizing: border-box;
      border: solid #30363e; border-width: 1px 1px 0; box-shadow: 0 0 8px #0008; padding: 0 4px;
      background: linear-gradient(#5c6672 0, #5c6672 30px, #e4f2fc 50px, #fff 140px, #a8b4c4 155px, #a8b4c4 165px, #eef8ff 185px, #fff 360px, #b4bccc 385px, #eef8ff 410px, #fff); }
    .dtitle { display: flex; align-items: center; justify-content: space-between; margin: 0 -4px; padding: 0 5px 0 7px; color: #000;
      background: linear-gradient(#fff4, #fff0 40%, #0002), linear-gradient(90deg, #8c98a8 0, #dce8f4 40px, #d4e4f4 110px, #8898ac 150px, #7c8ca0 205px, #1c242c 220px, #141c24 400px, #414c58 440px, #54606c 620px, #54606c 720px, #6c88a4 772px, #4c5864 800px, #1c242c 860px, #343c46); }
    .close { box-sizing: border-box; display: grid; place-items: center; width: 15px; height: 15px; border: 1px solid #c4c8cc; background: #4c5460; }
    .body { display: grid; grid-template-columns: 1fr 20px; min-height: 0; border: 1px solid #444; border-bottom: 0; overflow: hidden; background: #f0f0f0; }
    .body requisitos-form { overflow: hidden; min-height: 0; }
    .scroll { display: grid; grid-template-rows: 18px 42px 1fr; place-items: center; padding: 0 2px 0 3px; background: #eee; }
    .thumb { grid-row: 3; box-sizing: border-box; width: 15px; height: 100%; border: 1px solid #999; border-bottom: 0; border-radius: 2px 2px 0 0; background: linear-gradient(90deg, #f6f6f6, #ddd 45%, #c0c0c4 55%, #d0d0d4); display: grid; align-items: start; justify-items: center; padding-top: 475px; }
  `;

  private node(n: Node) {
    const x = 4 + n.depth * 19;
    const w = n.depth === 2 ? 54 : 17 + n.depth * 19;
    const last = n.text === "ACCESORIOS";
    const lines = n.depth === 2
      ? svg`<path d="M4.500 0V18M23.500 0V18M42.500 0V${n.text === "PUERTA" ? 9 : 18}M42.500 9H54" stroke="#888" fill="none"/>`
      : svg`<path d="M4.500 0V${last ? 9 : 18}M${n.depth ? "23.500 0V" + (n.text.startsWith("Nivel") ? 9 : 18) : "4.500 0"}M${x} 9.500h13" stroke="#888" fill="none"/>`;
    const box = n.sign
      ? svg`<rect x=${x - 3.5} y="5.500" width="8" height="8" fill="#fff" stroke="#888"/><path d=${`M${x - 2} 9.500h5` + (n.sign === "+" ? `M${x + 0.5} 7v5` : "")} stroke="#000"/>`
      : nothing;
    return html`<li class="node"><svg class="guide" width=${w} height="18" aria-hidden="true">${lines}${box}</svg>${TREE_ICONS[n.icon]}<span>${n.text}</span></li>`;
  }

  render() {
    const arrow = (c = "#444") => icon(8, 5, svg`<path d="M0 0h7L3.500 4z" fill=${c}/>`);
    return html`<div class="desktop">
      <main class="main">
        <header class="top">
          <button class="appbtn" aria-label="Inventor">${icon(38, 38, svg`<path d="M2 4l13-3 1 4-3 2 4 16 4 1v4L9 31l-1-4 3-2L7 8 3 9z" fill="#f6b83c" stroke="#9c6410"/><path d="M10 6l4 19" stroke="#ffe08c" stroke-width="2"/><path d="M29 17h8l-4 4z" fill="#222"/><text x="19" y="36" font-size="8" font-family="Noto Sans" fill="#111">PRO</text>`)}</button>
          <div class="title">
            <div class="quick">
              ${icon(16, 16, svg`<path d="M1 3h10l4 4v7H1z" fill="#f4f4f4" stroke="#333"/>`)}${arrow("#333")}
              ${icon(16, 16, svg`<path d="M1 13V4h5l2 2h5v3M1 13l4-5h10l-4 5z" fill="#ddd" stroke="#333"/>`)}
              ${icon(16, 16, svg`<path d="M1 1h14v14H1z" fill="#555" stroke="#111"/><path d="M4 1h8v5H4zM4 9h8v6H4z" fill="#eee"/>`)}
              ${icon(16, 16, svg`<path d="M1 7l6-5v3q8 0 8 8-3-4-8-4v3z" fill="#f4f4f4" stroke="#333"/>`)}
              ${icon(16, 16, svg`<path d="M15 7L9 2v3Q1 5 1 13q3-4 8-4v3z" fill="#aaa" stroke="#555"/>`)}
              ${icon(16, 16, svg`<path d="M1 3h9l5 4v8H1z" fill="#f0e4d0" stroke="#333"/><path d="M10 0L3 8h4l-2 6 9-8H9l4-6z" fill="#fca820" stroke="#a04c00"/>`)}${arrow("#333")}
              ${icon(16, 16, svg`<path d="M1 5l4-3h10v12H1z" fill="#6cb46c" stroke="#222"/>`)}
            </div>
            <div class="dark"></div>
            <div class="center">
              ${icon(6, 8, svg`<path d="M1 0l4 4-4 4z" fill="#111"/>`)}
              <input class="search" type="text" aria-label="Buscar" placeholder="Escriba palabra clave o frase">
              ${icon(18, 16, svg`<path d="M2 7l2-6h3l1 3h2l1-3h3l2 6v8h-6V9H8v6H2z" fill="#eee" stroke="#222"/>`)}
              ${icon(18, 16, svg`<circle cx="6" cy="5" r="4" fill="#eee" stroke="#222"/><path d="M8 8l7 7 2-2-7-6" fill="#eee" stroke="#222"/>`)}
              ${icon(18, 16, svg`<path d="M3 2q0 9 10 9l-3 1 3 3H5l2-4Q2 8 3 2zM8 7l5-5" fill="#eee" stroke="#222"/><path d="M8 7l5-4" stroke="#eee" stroke-width="2"/>`)}
              ${icon(18, 16, svg`<path d="M9 1l2 5h6l-5 3 2 6-5-4-5 4 2-6-5-3h6z" fill="#eee" stroke="#222"/>`)}
              ${icon(18, 16, svg`<circle cx="9" cy="5" r="4" fill="#eee" stroke="#222"/><path d="M2 15q0-5 7-5t7 5z" fill="#eee" stroke="#222"/>`)}
              <span class="user">Iniciar sesión</span>${arrow("#333")}
              <span class="gap">${icon(18, 14, svg`<path d="M2 1h4q4 6 0 12H2q3-6 0-12z" fill="#6c84dc" stroke="#112"/><path d="M16 1h-4q-4 6 0 12h4q-3-6 0-12z" fill="#4c64c4" stroke="#112"/>`)}</span>
              ${icon(18, 16, svg`<circle cx="9" cy="8" r="7.500" fill="#f0f4fc" stroke="#223"/><text x="9" y="12" text-anchor="middle" font-size="11" font-weight="bold" font-family="Noto Sans" fill="#1c4cb4">?</text>`)}${arrow("#333")}
            </div>
            <div class="winbtns">
              <button aria-label="Minimizar">${icon(12, 8, svg`<path d="M1 3h10v3H1z" fill="#fff"/>`)}</button>
              <button aria-label="Restaurar">${icon(12, 11, svg`<path d="M4 1h7v7H9M1 3h7v7H1z" fill="none" stroke="#fff" stroke-width="2"/>`)}</button>
              <button class="x" aria-label="Cerrar">${icon(12, 10, svg`<path d="M2 1l8 8M10 1L2 9" stroke="#fff" stroke-width="3"/>`)}</button>
            </div>
          </div>
          <div class="tabs"><button class="on">Ensamblar</button><button>Diseño</button><button>Modelo</button></div>
        </header>

        <div class="ribbon">
          <section class="panel wide">
            <div class="tools">
              <button class="big ins">${icon(32, 32, svg`<path d="M2 8h10v14l-6 4H2zM2 20l6-5h20l-6 9H2z" fill="#dde3ec" stroke="#345"/><path d="M4 6l4-3h9v10l-4 3H4z" fill="#86b4f0" stroke="#246"/><path d="M22 16h6v7h4l-7 8-7-8h4z" fill="#2c94f0" stroke="#14508c"/>`)}<span>Insertar</span>${arrow()}</button>
              <button class="big cre">${icon(32, 32, svg`<path d="M4 13l5-5h17v14l-5 6H4z" fill="#e8e8ec" stroke="#345"/><path d="M21 13l5-5v14l-5 6z" fill="#b8bcc8"/><path d="M26 0l2 4 4-2-2 4 3 1-4 2 2 4-4-2-2 3-1-4-4 1 2-4-3-2 4-1-1-3 3 2z" fill="#fc7c1c"/><circle cx="26" cy="6" r="2" fill="#ffe860"/>`)}<span>Crear</span></button>
              <div class="small">
                <button>${icon(16, 16, svg`<path d="M1 1h5v5H1zM10 1h5v5h-5zM1 10h5v5H1zM10 10h5v5h-5z" fill="#a8c8f0" stroke="#246"/><path d="M7 3h2M3 7v2M12 7v2M7 12h2" stroke="#246"/>`)}Patrón</button>
                <button>${icon(16, 14, svg`<path d="M1 2h6v10H1zM9 2h6v10H9zM1 7h6M9 7h6M3 5v3M11 5v3" fill="#c8dcf4" stroke="#246"/>`)}Copiar</button>
                <button>${icon(16, 16, svg`<path d="M1 3h5v10H1zM10 3h5v10h-5zM1 8h5M10 8h5" fill="#c8dcf4" stroke="#246"/><path d="M8 0v16" stroke="#222" stroke-width="1.500"/>`)}Simetría</button>
              </div>
              <div class="small far">
                <button>${icon(16, 16, svg`<path d="M10 1h5v5h-5z" fill="#78a8e8" stroke="#246"/><path d="M1 10h6v5H1z" fill="#dde" stroke="#246"/><path d="M2 7l5-5M4 2h3v3" fill="none" stroke="#246"/>`)}Reem</button>
                <button>${icon(16, 16, svg`<path d="M1 4h9l-3 9H1z" fill="#eee" stroke="#345"/><circle cx="11" cy="11" r="4" fill="#ccc" stroke="#345"/><path d="M7 8l6-7 2 2-6 6z" fill="#f0a840" stroke="#643"/>`)}Crea</button>
                <button>${icon(16, 16, svg`<path d="M1 1h6v7H1z" fill="#78b8e8" stroke="#246"/><path d="M1 8h14v6H1z" fill="#dde4ee" stroke="#246"/>`)}Cont</button>
              </div>
            </div>
            <div class="ptitle">Componentes</div>
          </section>
          <section class="edge"><div class="mid">o ${arrow()}</div><div class="ptitle">bajo</div></section>
          <section class="panel">
            <div class="tools"><button class="big conv off">${icon(32, 32, svg`<path d="M8 2h4v18h12v4H8zM14 18V8l8 10z" fill="#e4e4e4" stroke="#c0c0c0"/><path d="M16 12l8-9 3 2-8 9z" fill="#e8e8e8" stroke="#bbb"/><circle cx="21" cy="27" r="4" fill="#eee" stroke="#bbb"/><path d="M25 26h4v-2l4 3-4 3v-2h-4z" fill="#aaa"/>`)}<span>Convertir en<br>conjunto soldado</span></button></div>
            <div class="ptitle">Convertir ▾</div>
          </section>
          <section class="panel">
            <div class="tools">
              <button class="big cable">${icon(32, 32, svg`<path d="M2 4l5-1 10 14-5 3L1 10z" fill="#c4c8d0" stroke="#445"/><path d="M12 19q0 6-4 10M14 19q3 4 3 11" stroke="#e03030" stroke-width="2" fill="none"/><path d="M14 18q2 6 2 12" stroke="#6040b0" stroke-width="2" fill="none"/><path d="M16 17l8 8" stroke="#2080d0" stroke-width="3"/><circle cx="20" cy="5" r="4.500" fill="#90b8ec" stroke="#246"/><path d="M25 4h3V2l4 3-4 3V6h-3z" fill="#124"/>`)}<span>Cable y<br>arnés</span></button>
              <button class="big tubo">${icon(32, 32, svg`<path d="M8 8q4-7 8-2l12 16q1 8-6 8H6q-5-4 0-9h8L7 11z" fill="#c4c8d0" stroke="#445"/><ellipse cx="6" cy="25" rx="3" ry="5" fill="#e8eaee" stroke="#445"/><circle cx="20" cy="5" r="4.500" fill="#90b8ec" stroke="#246"/><path d="M25 4h3V2l4 3-4 3V6h-3z" fill="#124"/>`)}<span>Tubos y<br>tuberías</span></button>
            </div>
            <div class="ptitle">Iniciar ▾</div>
          </section>
          <div class="rest"></div>
        </div>

        <div class="work">
          <aside class="dock">
            <div class="grip"></div>
            <div class="head">iLogic</div>
            <div class="dtabs"><button>Reglas</button><button class="on">Formularios</button><button>Formularios globales</button></div>
            <div class="pane"><button class="rule">TOMA REQUISITOS TABLERO</button></div>
            <div class="blackline"></div>
            <div class="grip second"></div>
            <div class="head model">Modelo ${arrow("#fff")}</div>
            <div class="filter">
              ${icon(16, 16, svg`<path d="M1 2h14l-5 6v6l-4-2V8z" fill="#bbb" stroke="#222" stroke-width="1.500"/>`)}<span class="sep"></span>
              ${icon(16, 16, svg`<path d="M1 3l5-3v5zM6 3h2" fill="none" stroke="#222"/><path d="M10 7h4v3h-4zM7 12h4v3H7z" fill="#c02030" stroke="#222"/><path d="M12 10v3h-2" fill="none" stroke="#222"/>`)}
              <span class="drop">Vista de ensamblaje ${arrow()}</span>
              ${icon(16, 14, svg`<path d="M1 7l2-5h3l1 3h2l1-3h3l2 5v6h-5V9H6v4H1z" fill="#111"/>`)}
            </div>
            <div class="tree">
              <div class="node root">${icon(18, 16, svg`<path d="M2 3l3-2h6v7l-3 2H2z" fill="#9cbcec" stroke="#124"/><path d="M1 9h8v6H1zM9 9l2-2h6v6l-2 2H9z" fill="#f4bc20" stroke="#532"/>`)}<span>E-01TAB99-1 (ACCESORIOS)</span></div>
              <ul>${TREE.map((n) => this.node(n))}</ul>
            </div>
          </aside>
          <section class="canvas" aria-label="Modelo del tablero">
            <svg class="cad" viewBox="0 21 1568 2709" preserveAspectRatio="none" aria-hidden="true">${cabinet}</svg>
            <div class="doc">
              ${icon(13, 12, svg`<path d="M1 7h11v3H1z" fill="#fff" stroke="#444"/>`)}
              ${icon(12, 12, svg`<path d="M3 1h8v8H9M1 3h8v8H1zM3.500 6h3v3h-3z" fill="none" stroke="#444"/>`)}
              ${icon(12, 12, svg`<path d="M1 1h3l2 3 2-3h3L8 6l3 5H8L6 8l-2 3H1l3-5z" fill="#fff" stroke="#444"/>`)}
            </div>
            <svg class="cube" width="90" height="100" viewBox="0 0 90 100" aria-hidden="true">
              <defs><filter id="sh"><feGaussianBlur stdDeviation="4"/></filter></defs>
              <path d="M10 68l36 24 36-24-36 12z" fill="#888" filter="url(#sh)"/>
              <path d="M10 23L45 6l36 17-36 20z" fill="#f1f1f1" stroke="#8c8c8c" stroke-dasharray="2 1"/>
              <path d="M10 23l35 20v41L13 64z" fill="#e9e9ea" stroke="#8c8c8c"/><path d="M81 23L45 43v41l33-20z" fill="#dededf" stroke="#8c8c8c"/>
              <g font-family="Liberation Sans" font-size="8" font-weight="bold" fill="#a4a4a4" text-anchor="middle">
                <text transform="matrix(.8 .5 -.7 .4 45 24)">SUPERIOR</text>
                <text transform="matrix(.7 .5 .05 1.200 28 58)">FRONTAL</text>
                <text transform="matrix(.7 -.5 -.05 1.200 63 58)">DERECHA</text>
              </g>
            </svg>
            <svg class="nav" viewBox="0 0 30 194" aria-hidden="true">
              <g fill="none" stroke="#9a9a9e" stroke-width="1.500">
                <circle cx="25" cy="6" r="3.500"/><path d="M24 5l2 2M26 5l-2 2"/>
                <path d="M6 32q0-10 10-10h9v10q-1 10-10 10T6 32z" fill="#fff"/><circle cx="16" cy="32" r="6"/>
                <path d="M3 60h25" stroke="#c4c4c8"/>
                <path d="M11 80l-4-6 2-1 3 3-1-8h2l1 6v-8h2l1 8 2-6h2l-2 9 3-2 1 1-5 8h-6z" fill="#fff"/>
                <circle cx="15" cy="97" r="5" fill="#fff"/><path d="M19 101l4 5" stroke-width="3"/>
                <ellipse cx="16" cy="132" rx="8" ry="3"/><ellipse cx="16" cy="132" rx="3" ry="8"/>
                <path d="M8 160h16v12H8zM11 163h9v6h-9zM8 160l3-4h3"/>
                <circle cx="25" cy="187" r="3.500"/><path d="M23 187h4"/>
              </g>
              <path d="M13 53h5l-2.500 3zM13 115h5l-2.500 3zM13 149h5l-2.500 3z" fill="#8a8a8e"/>
            </svg>
          </section>
        </div>
      </main>

      <section class="dialog" role="dialog" aria-label="TOMA REQUISITOS TABLERO">
        <div class="dtitle"><span>TOMA REQUISITOS TABLERO</span>
          <button class="close" aria-label="Cerrar">${icon(7, 7, svg`<path d="M1 1l5 5M6 1L1 6" stroke="#fff" stroke-width="2"/>`)}</button></div>
        <div class="body">
          <requisitos-form></requisitos-form>
          <div class="scroll">${icon(7, 4, svg`<path d="M0 4l3.500-4L7 4z" fill="#444"/>`)}
            <div class="thumb">${icon(7, 9, svg`<path d="M0 1h7M0 4h7M0 7h7" stroke="#555"/>`)}</div></div>
        </div>
      </section>
      <task-bar></task-bar>
    </div>`;
  }
}
